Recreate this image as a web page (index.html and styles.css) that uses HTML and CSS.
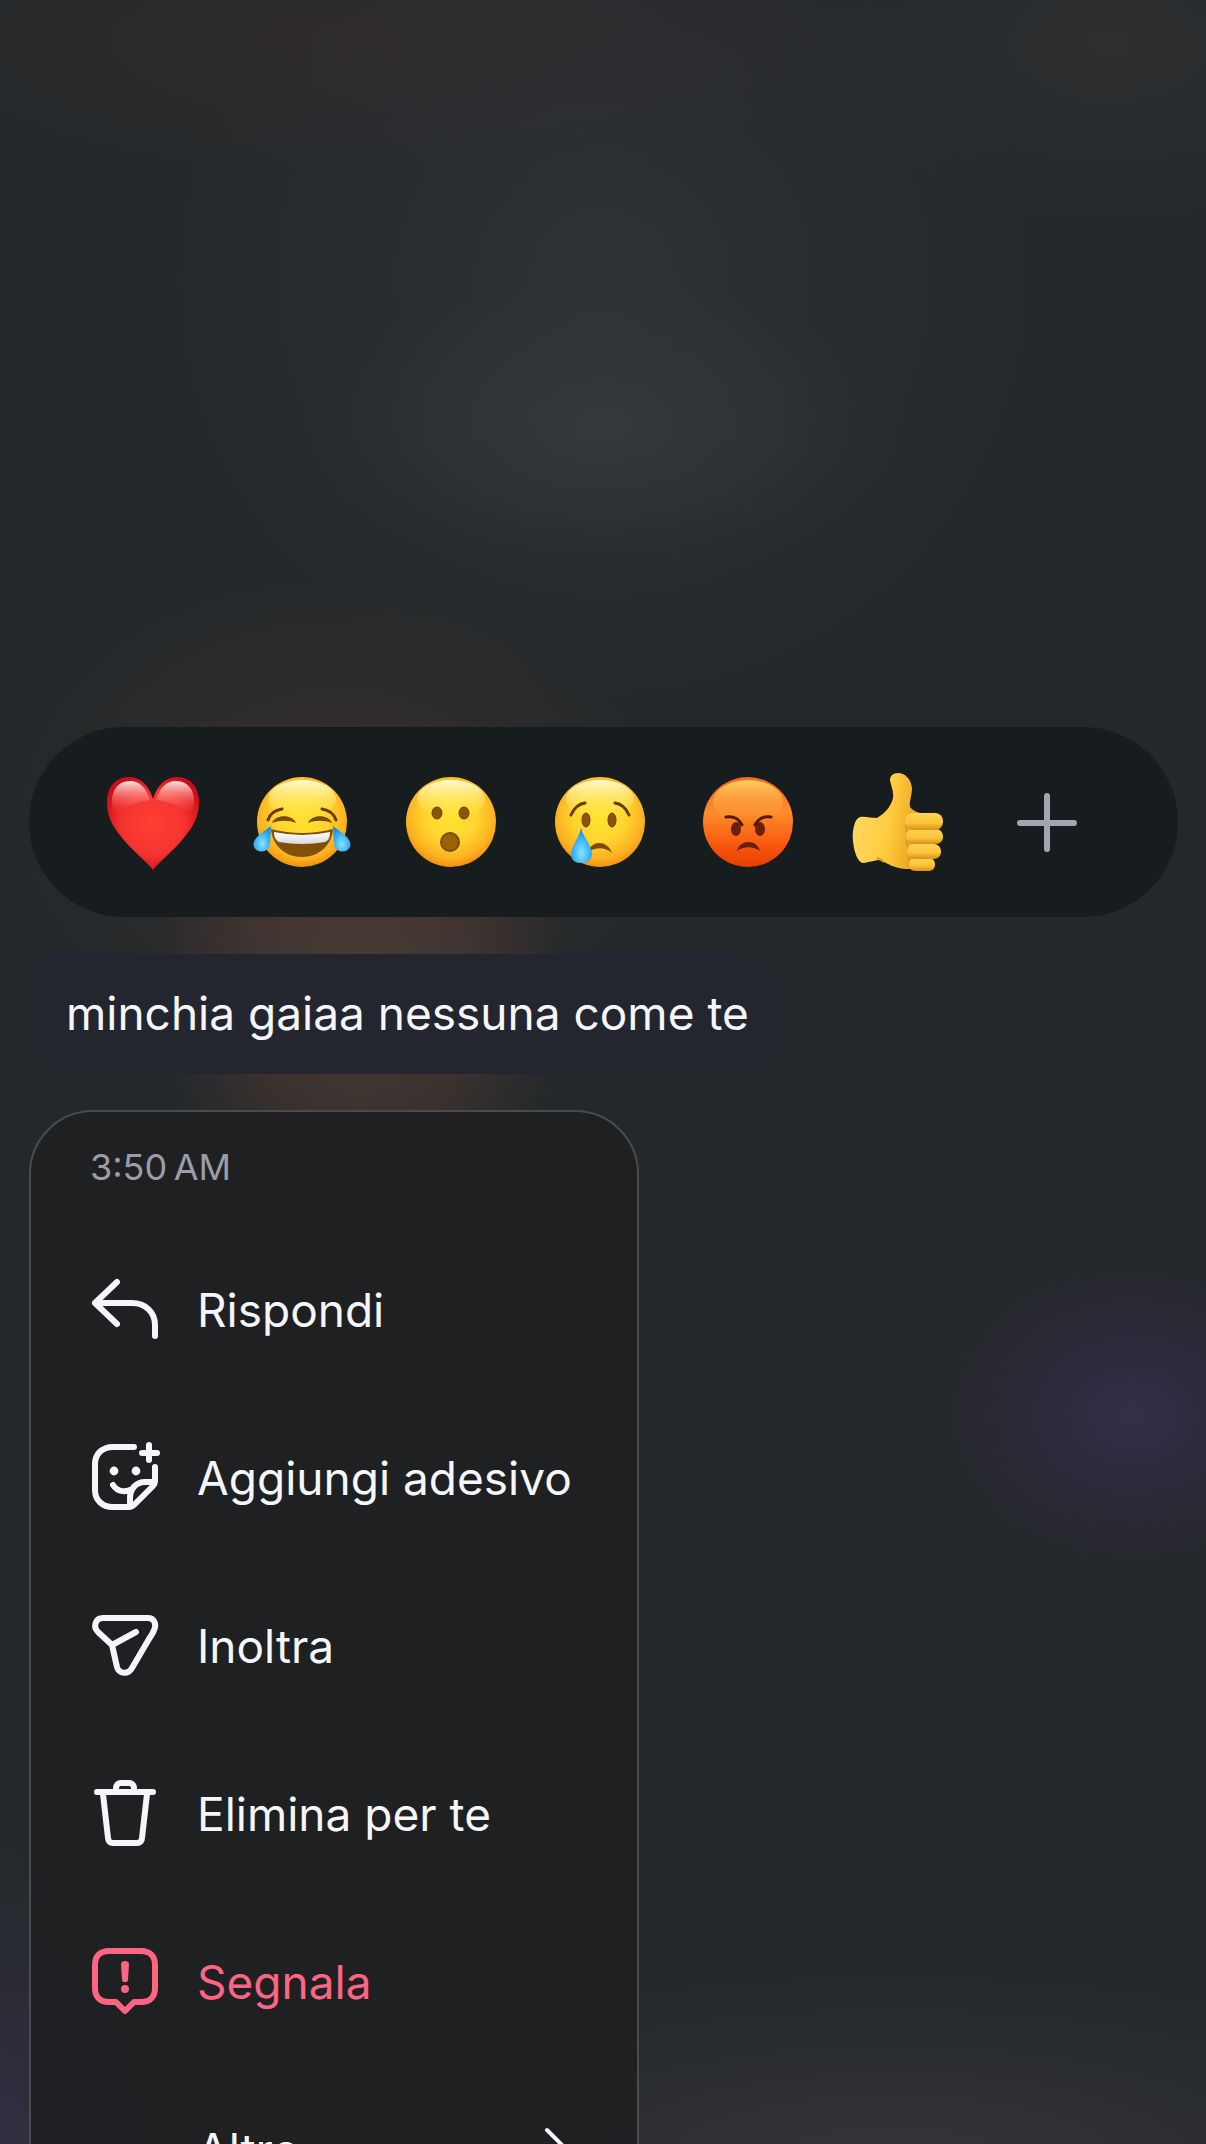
FILE: index.html
```
<!DOCTYPE html>
<html lang="it">
<head>
  <meta charset="UTF-8">
  <meta name="viewport" content="width=device-width, initial-scale=1.0">
  <title>Messaggio</title>
  <link rel="stylesheet" href="styles.css">
</head>
<body>
  <!-- gradients shared by the emoji -->
  <svg class="defs" width="0" height="0" aria-hidden="true">
    <defs>
      <radialGradient id="face" cx="0.5" cy="0.42" r="0.58">
        <stop offset="0" stop-color="#ffe433"/>
        <stop offset="0.5" stop-color="#ffd52e"/>
        <stop offset="0.85" stop-color="#fdb021"/>
        <stop offset="1" stop-color="#f0900f"/>
      </radialGradient>
      <linearGradient id="shine" x1="0" y1="0" x2="0" y2="1">
        <stop offset="0" stop-color="#fffbd0"/>
        <stop offset="1" stop-color="#ffec50" stop-opacity="0"/>
      </linearGradient>
      <linearGradient id="angry" x1="0" y1="0" x2="0" y2="1">
        <stop offset="0" stop-color="#f5691f"/>
        <stop offset="0.4" stop-color="#fd8b2b"/>
        <stop offset="0.75" stop-color="#f9590f"/>
        <stop offset="1" stop-color="#e63e00"/>
      </linearGradient>
      <linearGradient id="angry-shine" x1="0" y1="0" x2="0" y2="1">
        <stop offset="0" stop-color="#ffcf62"/>
        <stop offset="1" stop-color="#ff9a35" stop-opacity="0"/>
      </linearGradient>
      <radialGradient id="heart" cx="0.5" cy="0.5" r="0.56">
        <stop offset="0" stop-color="#ff4034"/>
        <stop offset="0.6" stop-color="#f53430"/>
        <stop offset="1" stop-color="#cf0d18"/>
      </radialGradient>
      <linearGradient id="heart-shine" x1="0" y1="0" x2="0" y2="1">
        <stop offset="0" stop-color="#ffe3e0"/>
        <stop offset="1" stop-color="#ff5a50" stop-opacity="0"/>
      </linearGradient>
      <radialGradient id="tear" cx="0.5" cy="0.7" r="0.65">
        <stop offset="0" stop-color="#8fe2ff"/>
        <stop offset="0.5" stop-color="#45bdf8"/>
        <stop offset="1" stop-color="#1890e8"/>
      </radialGradient>
      <linearGradient id="teeth" x1="0" y1="0" x2="0" y2="1">
        <stop offset="0" stop-color="#ffffff"/>
        <stop offset="1" stop-color="#d9d9df"/>
      </linearGradient>
      <linearGradient id="hand" x1="0" y1="0" x2="1" y2="0.2">
        <stop offset="0" stop-color="#ffd965"/>
        <stop offset="0.6" stop-color="#ffcc3f"/>
        <stop offset="1" stop-color="#eba51f"/>
      </linearGradient>
      <linearGradient id="finger" x1="0" y1="0" x2="0" y2="1">
        <stop offset="0" stop-color="#ffd456"/>
        <stop offset="0.6" stop-color="#fac338"/>
        <stop offset="1" stop-color="#d98f16"/>
      </linearGradient>
    </defs>
  </svg>

  <main class="overlay">
    <div class="reactions">
      <button class="reaction" aria-label="Cuore">
        <svg viewBox="0 0 100 100">
          <path fill="url(#heart)" d="M50 27C46 13 37 5 26 5C13 5 4 15 4 30C4 45 10 55 20 67C30 79 43 89 50 98C57 89 70 79 80 67C90 55 96 45 96 30C96 15 87 5 74 5C63 5 54 13 50 27Z"/>
          <path fill="url(#heart-shine)" d="M47 28C43 15 36 9 27 9C15 9 9 18 9 29C9 33 10 38 12 41C23 33 36 30 47 28Z"/>
          <path fill="url(#heart-shine)" d="M53 28C57 15 64 9 73 9C85 9 91 18 91 29C91 33 90 38 88 41C77 33 64 30 53 28Z"/>
        </svg>
      </button>
      <button class="reaction" aria-label="Risata">
        <svg viewBox="0 0 100 100">
          <circle cx="50" cy="50" r="45" fill="url(#face)"/>
          <ellipse cx="50" cy="27" rx="34" ry="19" fill="url(#shine)"/>
          <g fill="none" stroke="#6b3a05" stroke-width="3" stroke-linecap="round">
            <path d="M16 48C18 42 23 38 30 37"/>
            <path d="M84 48C82 42 77 38 70 37"/>
          </g>
          <path fill="#7d4a05" d="M20 51C23 42 41 42 44 51C37 48 28 48 20 51ZM80 51C77 42 59 42 56 51C63 48 72 48 80 51Z"/>
          <path fill="#835008" d="M19 57Q50 65 81 57C80 73 67 85 50 85C33 85 20 73 19 57Z"/>
          <path fill="url(#teeth)" d="M22 60Q50 66 78 60C78 66 76 69 73 70Q50 74 27 70C24 68 22 66 22 60Z"/>
          <path fill="url(#tear)" d="M19 54C18 64 19 70 17 75C14 81 5 81 2 75C-1 68 9 61 19 54Z"/>
          <path fill="url(#tear)" d="M81 54C82 64 81 70 83 75C86 81 95 81 98 75C101 68 91 61 81 54Z"/>
        </svg>
      </button>
      <button class="reaction" aria-label="Stupore">
        <svg viewBox="0 0 100 100">
          <circle cx="50" cy="50" r="45" fill="url(#face)"/>
          <ellipse cx="50" cy="27" rx="34" ry="19" fill="url(#shine)"/>
          <g fill="#8a5508" stroke="#6f3f04" stroke-width="1">
            <ellipse cx="36" cy="41" rx="5" ry="6"/>
            <ellipse cx="63" cy="41" rx="5" ry="6"/>
          </g>
          <circle cx="49" cy="70" r="9" fill="#9a6208" stroke="#7d4a06" stroke-width="2"/>
        </svg>
      </button>
      <button class="reaction" aria-label="Tristezza">
        <svg viewBox="0 0 100 100">
          <circle cx="50" cy="50" r="45" fill="url(#face)"/>
          <ellipse cx="50" cy="27" rx="34" ry="19" fill="url(#shine)"/>
          <g fill="#8a5508" stroke="#6f3f04" stroke-width="1">
            <ellipse cx="36" cy="48" rx="4" ry="7"/>
            <ellipse cx="62" cy="48" rx="4" ry="7"/>
          </g>
          <g fill="none" stroke="#6b3a05" stroke-width="3" stroke-linecap="round">
            <path d="M21 43C24 36 28 32 35 31"/>
            <path d="M79 43C76 36 72 32 65 31"/>
          </g>
          <path fill="#7d4a05" d="M38 80C42 68 57 68 62 81C55 75 46 75 38 80Z"/>
          <path fill="url(#tear)" d="M31 56C34 66 42 74 42 82C42 88 37 91 31 91C25 91 21 88 21 82C21 74 29 66 31 56Z"/>
        </svg>
      </button>
      <button class="reaction" aria-label="Rabbia">
        <svg viewBox="0 0 100 100">
          <circle cx="49" cy="50" r="45" fill="url(#angry)"/>
          <ellipse cx="49" cy="30" rx="35" ry="22" fill="url(#angry-shine)"/>
          <g fill="#6a1f06">
            <ellipse cx="37" cy="57" rx="5" ry="7"/>
            <ellipse cx="61" cy="57" rx="5" ry="7"/>
            <path d="M38 79C41 67 58 67 61 79C54 74 45 74 38 79Z"/>
          </g>
          <g fill="none" stroke="#551805" stroke-width="3" stroke-linecap="round">
            <path d="M27 45C34 44 40 47 43 53"/>
            <path d="M72 45C65 44 59 47 56 53"/>
          </g>
        </svg>
      </button>
      <button class="reaction" aria-label="Mi piace">
        <svg viewBox="0 0 100 100">
          <path fill="url(#hand)" d="M50 1C45 1 42 4 42 8C43 14 46 20 45 26C43 35 36 42 29 46C23 46 17 44 12 45C6 47 4 60 5 69C6 80 10 92 16 91C22 90 27 88 33 88C39 92 47 96 57 97H72L74 42C69 40 64 38 62 35C61 29 64 24 64 16C63 7 57 1 50 1Z"/>
          <path fill="none" stroke="#d99a20" stroke-width="2" d="M29 86C32 87 34 88 36 90M74 42C67 41 59 43 58 50C57 55 60 57 59 64C58 69 60 72 60 78C60 84 62 88 62 96"/>
          <rect x="61" y="86" width="26" height="13" rx="6" fill="url(#finger)"/>
          <rect x="59" y="72" width="34" height="15" rx="7" fill="url(#finger)"/>
          <rect x="58" y="57" width="37" height="15" rx="7" fill="url(#finger)"/>
          <rect x="57" y="41" width="38" height="17" rx="8" fill="url(#finger)"/>
        </svg>
      </button>
      <button class="reaction" aria-label="Altre reazioni">
        <svg viewBox="0 0 100 100">
          <path fill="none" stroke="#a3a5b0" stroke-width="6" stroke-linecap="round" d="M50 24V77M23 51H77"/>
        </svg>
      </button>
    </div>

    <p class="bubble">minchia gaiaa nessuna come te</p>

    <div class="menu">
      <time class="menu-time" datetime="03:50">3:50&#8201;AM</time>
      <ul class="menu-list">
        <li>
          <button class="menu-item">
            <svg class="icon" viewBox="0 0 72 72">
              <path d="M28 8L6 29L28 50M6 29H43C56 29 66 38 66 51V62"/>
            </svg>
            Rispondi
          </button>
        </li>
        <li>
          <button class="menu-item">
            <svg class="icon" viewBox="0 0 72 72">
              <path d="M45 5H24C13 5 6 12 6 22V48C6 58 13 65 24 65H40C43 65 44 64 46 62L63 45C65 43 66 42 66 39V25"/>
              <path d="M41 64V56C41 47 47 40 56 40H65M24 43C29 51 38 50 43 47"/>
              <path d="M60 3V18M53 11H68"/>
              <circle class="solid" cx="25" cy="29" r="4.4"/>
              <circle class="solid" cx="47" cy="29" r="4.4"/>
            </svg>
            Aggiungi adesivo
          </button>
        </li>
        <li>
          <button class="menu-item">
            <svg class="icon" viewBox="0 0 72 72">
              <path d="M14 8H59C65 8 68 14 65 20C64 23 62 26 60 29L43 58C39 65 30 64 28 57L23 35L9 22C4 17 6 8 14 8ZM23 35L47 22"/>
            </svg>
            Inoltra
          </button>
        </li>
        <li>
          <button class="menu-item">
            <svg class="icon" viewBox="0 0 72 72">
              <path d="M8 14H64M27 13V10C27 7 29 5 32 5H40C43 5 45 7 45 10V13M14 16L19 60C19 63 21 65 24 65H48C51 65 53 63 53 60L58 16"/>
            </svg>
            Elimina per te
          </button>
        </li>
        <li>
          <button class="menu-item danger">
            <svg class="icon" viewBox="0 0 72 72">
              <path d="M20 5H52C61 5 66 10 66 19V42C66 51 61 56 52 56H45L36 65L27 56H20C11 56 6 51 6 42V19C6 10 11 5 20 5Z"/>
              <path class="solid" d="M32 18C32 14 40 14 40 18L39 34C39 37 33 37 33 34Z"/>
              <circle class="solid" cx="36" cy="43" r="4"/>
            </svg>
            Segnala
          </button>
        </li>
        <li>
          <button class="menu-item">
            <span class="icon"></span>
            Altro
            <svg class="chevron" viewBox="0 0 36 48">
              <path d="M4 4L24 24L4 44"/>
            </svg>
          </button>
        </li>
      </ul>
    </div>
  </main>
</body>
</html>
```

FILE: styles.css
```
* {
  box-sizing: border-box;
}
body {
  margin: 0;
  background-color: #24282a;
  color: #f5f6fa;
  font-family: Inter, "Noto Sans", sans-serif;
  font-size: 46px;
}
button {
  border: none;
  background: none;
  padding: 0;
  color: inherit;
  font: inherit;
  cursor: pointer;
}
.defs {
  position: absolute;
}

/* Dimmed chat behind the message */
.overlay {
  display: flex;
  flex-direction: column;
  align-items: flex-start;
  height: 100vh;
  padding: 727px 28px 0 29px;
  overflow: hidden;
  background:
    radial-gradient(ellipse 210px 250px at 30% 46%, rgba(84, 66, 56, 0.75), rgba(80, 60, 52, 0.5) 55%, transparent),
    radial-gradient(ellipse 320px 240px at 28% 38%, rgba(70, 52, 50, 0.6), transparent),
    radial-gradient(ellipse 190px 150px at 94% 66%, #352e4a, rgba(48, 42, 64, 0.6) 60%, rgba(44, 40, 56, 0.4) 85%, transparent),
    radial-gradient(ellipse 300px 150px at 50% 20%, rgba(56, 60, 63, 0.7), rgba(52, 56, 58, 0.4) 60%, transparent),
    radial-gradient(ellipse 430px 420px at 50% 13%, rgba(50, 54, 58, 0.8), rgba(46, 50, 54, 0.4) 60%, transparent),
    radial-gradient(ellipse 500px 140px at 34% 2%, rgba(54, 44, 46, 0.75), transparent),
    radial-gradient(ellipse 300px 180px at 92% 2%, rgba(48, 49, 51, 0.8), transparent),
    radial-gradient(ellipse 620px 190px at 74% 101%, #353538, transparent),
    radial-gradient(ellipse 200px 300px at 0% 100%, #322f42, transparent),
    #24282a;
}

/* Reaction bar */
.reactions {
  display: flex;
  flex-shrink: 0;
  align-items: center;
  justify-content: space-between;
  width: 100%;
  height: 190px;
  padding: 0 81px 0 74px;
  border-radius: 95px;
  background-color: #171c1f;
}
.reaction {
  width: 100px;
  height: 100px;
}
.reaction svg {
  display: block;
  overflow: visible;
}

/* Message */
.bubble {
  margin: 37px 0 36px;
  padding: 29px 37px 31px;
  border-radius: 16px 60px 60px 60px;
  background-color: #24262f;
  line-height: 60px;
  white-space: nowrap;
}

/* Context menu */
.menu {
  flex-shrink: 0;
  width: 610px;
  max-width: 100%;
  padding-bottom: 32px;
  border: 2px solid #4a4b4d;
  border-radius: 64px;
  background-color: rgba(30, 31, 33, 0.9);
}
.menu-time {
  display: block;
  padding: 31px 59px 35px;
  color: #9b9ca8;
  font-size: 36px;
  line-height: 48px;
}
.menu-list {
  margin: 0;
  padding: 0;
  list-style: none;
}
.menu-item {
  display: flex;
  align-items: center;
  gap: 36px;
  width: 100%;
  height: 168px;
  padding: 0 58px;
  text-align: left;
  white-space: nowrap;
}
.danger {
  color: #ff6582;
}
.icon {
  flex-shrink: 0;
  width: 72px;
  height: 72px;
  fill: none;
  stroke: currentColor;
  stroke-width: 6;
  stroke-linecap: round;
  stroke-linejoin: round;
}
.icon .solid {
  fill: currentColor;
  stroke: none;
}
.chevron {
  width: 36px;
  height: 48px;
  margin-left: auto;
  fill: none;
  stroke: currentColor;
  stroke-width: 4;
  stroke-linecap: round;
  stroke-linejoin: round;
}
```
